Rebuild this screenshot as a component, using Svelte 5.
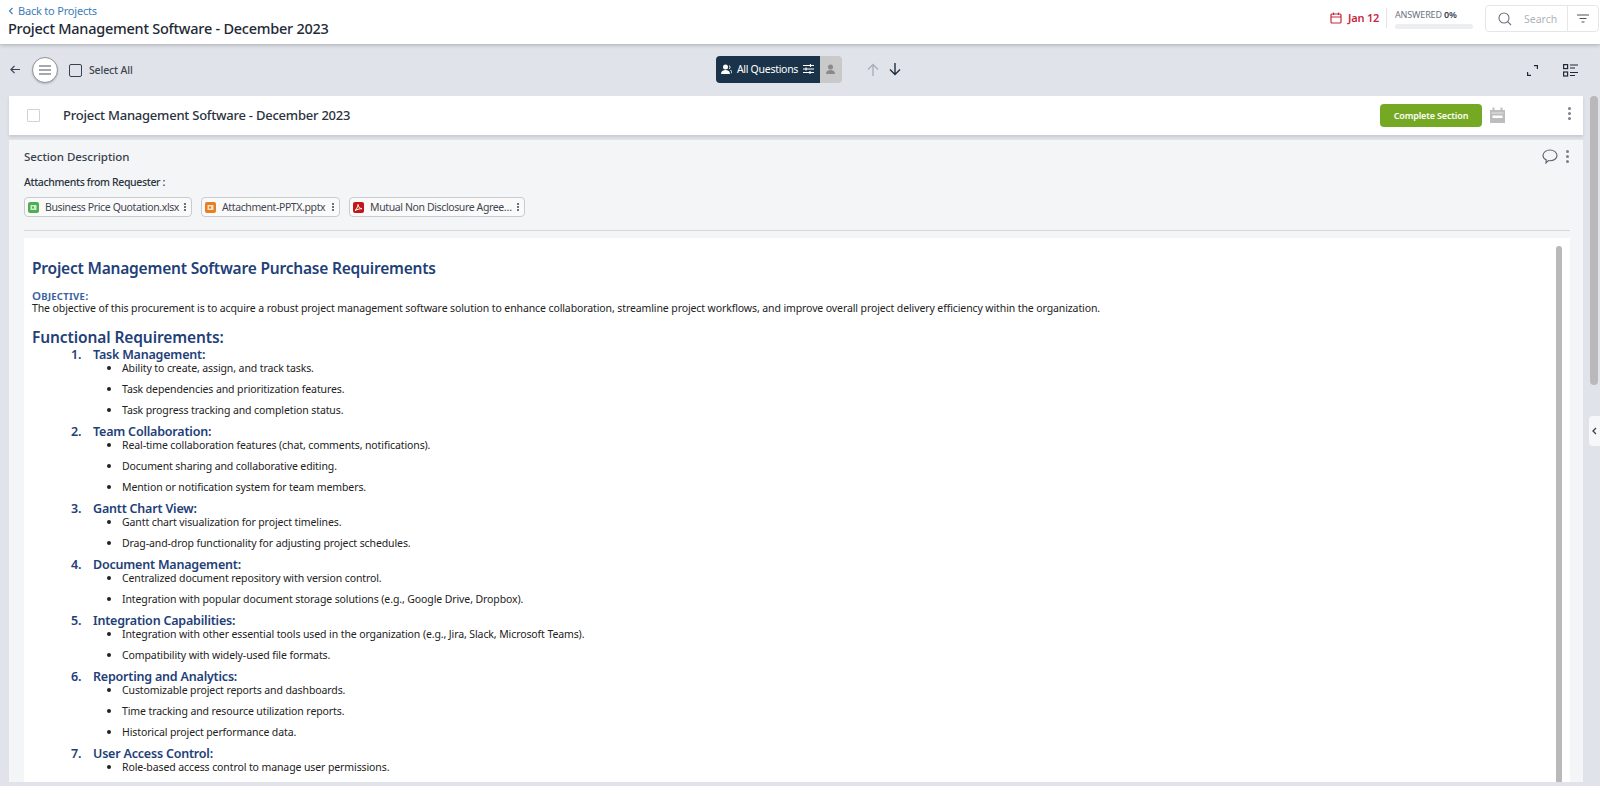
<script>
  const sections = [
    { t: 'Task Management:', i: ['Ability to create, assign, and track tasks.', 'Task dependencies and prioritization features.', 'Task progress tracking and completion status.'] },
    { t: 'Team Collaboration:', i: ['Real-time collaboration features (chat, comments, notifications).', 'Document sharing and collaborative editing.', 'Mention or notification system for team members.'] },
    { t: 'Gantt Chart View:', i: ['Gantt chart visualization for project timelines.', 'Drag-and-drop functionality for adjusting project schedules.'] },
    { t: 'Document Management:', i: ['Centralized document repository with version control.', 'Integration with popular document storage solutions (e.g., Google Drive, Dropbox).'] },
    { t: 'Integration Capabilities:', i: ['Integration with other essential tools used in the organization (e.g., Jira, Slack, Microsoft Teams).', 'Compatibility with widely-used file formats.'] },
    { t: 'Reporting and Analytics:', i: ['Customizable project reports and dashboards.', 'Time tracking and resource utilization reports.', 'Historical project performance data.'] },
    { t: 'User Access Control:', i: ['Role-based access control to manage user permissions.'] }
  ];
  const chips = [
    { n: 'Business Price Quotation.xlsx', c: '#4caf50', w: 168, pdf: false },
    { n: 'Attachment-PPTX.pptx', c: '#e67e22', w: 139, pdf: false },
    { n: 'Mutual Non Disclosure Agree…', c: '#c01818', w: 176, pdf: true }
  ];
</script>

<div class="page">
  <header class="top">
    <div class="top-left">
      <a class="back" href="#top"><svg width="6" height="8" viewBox="0 0 6 8"><path d="M4.5 1 1.5 4l3 3" fill="none" stroke="#3d7ab8" stroke-width="1.1"/></svg>Back to Projects</a>
      <h1 class="title">Project Management Software - December 2023</h1>
    </div>
    <div class="due">
      <svg width="12" height="12" viewBox="0 0 12 12" fill="none" stroke="#c8283c" stroke-width="1.2"><rect x="1" y="2" width="10" height="9" rx="1"/><path d="M1 5h10M3.5 0.5v2.5M8.500 0.500v2.500"/></svg>
      <span>Jan 12</span>
    </div>
    <div class="progress">
      <div class="ans">ANSWERED <b>0%</b></div>
      <div class="bar"></div>
    </div>
    <div class="search">
      <svg class="mag" width="14" height="14" viewBox="0 0 14 14" fill="none" stroke="#6b7280" stroke-width="1.1"><circle cx="6" cy="6" r="5"/><path d="m9.700 9.700 3.300 3.300"/></svg>
      <span class="ph">Search</span>
      <span class="filter"><svg width="12" height="9" viewBox="0 0 12 9" stroke="#4b5563" stroke-width="1.200"><path d="M0 1h12M2.500 4.500h7M4.500 8h3"/></svg></span>
    </div>
  </header>

  <div class="toolbar">
    <div class="tl">
      <svg class="arrow" width="10" height="9" viewBox="0 0 11 10" fill="none" stroke="#374151" stroke-width="1.300"><path d="M5 1 1 5l4 4M1 5h10"/></svg>
      <span class="circle"><svg width="12" height="10" viewBox="0 0 12 10" stroke="#4b5563" stroke-width="1.200"><path d="M0 1h12M0 5h12M0 9h12"/></svg></span>
      <span class="check dark"></span>
      <span class="sel">Select All</span>
    </div>
    <div class="tc">
      <div class="pill">
        <div class="pill-on">
          <svg width="11" height="10" viewBox="0 0 11 10" fill="#fff"><circle cx="4.500" cy="3" r="2.500"/><path d="M0 10c0-3 2-4 4.500-4S9 7 9 10z"/><path d="M8 1.500a2 2 0 0 1 0 3.500M9.500 6c1 .8 1.500 2 1.500 3.500" fill="none" stroke="#fff"/></svg>
          <span>All Questions</span>
          <svg width="11" height="10" viewBox="0 0 11 10" stroke="#fff" stroke-width="1.200"><path d="M0 1.500h11M0 5h11M0 8.500h11"/><path d="M7.500 0v3M3 3.500v3M7 7v3"/></svg>
        </div>
        <div class="pill-off"><svg width="9" height="10" viewBox="0 0 9 10" fill="#8a8a8a"><circle cx="4.500" cy="3" r="2.500"/><path d="M0 10c0-3 2-4 4.500-4S9 7 9 10z"/></svg></div>
      </div>
      <svg class="up" width="12" height="13" viewBox="0 0 12 13" fill="none" stroke="#a9afb8" stroke-width="1.400"><path d="M1 6.500l5-5 5 5M6 1.500V13"/></svg>
      <svg class="down" width="12" height="13" viewBox="0 0 12 13" fill="none" stroke="#1f2f40" stroke-width="1.400"><path d="M1 6.500l5 5 5-5M6 11.500V0"/></svg>
    </div>
    <div class="tr">
      <svg width="11" height="11" viewBox="0 0 11 11" fill="none" stroke="#1f2937" stroke-width="1.200"><path d="M7 .6h3.400V4M4 10.400H.6V7"/></svg>
      <svg width="15" height="13" viewBox="0 0 15 13" fill="none" stroke="#1f2937" stroke-width="1.200"><rect x=".6" y=".6" width="4" height="4"/><rect x=".6" y="8" width="4" height="4"/><path d="M7 1h8M7 4h5M7 8.500h8M7 11.500h5"/></svg>
    </div>
  </div>

  <div class="main">
    <div class="col">
      <section class="card">
        <span class="check light"></span>
        <h2 class="card-title">Project Management Software - December 2023</h2>
        <button class="complete">Complete Section</button>
        <svg class="cal" width="17" height="17" viewBox="0 0 17 17" fill="#bdbdbd"><path d="M1 3h15v13H1zM3.500 0.500h2v3h-2zM11.500 0.500h2v3h-2z"/><path d="M2.500 5.500h12v1h-12z" fill="#e6e6e6"/><path d="M3.500 8.500h10v2.500h-10z" fill="#fff"/></svg>
        <span class="kebab big"><i></i><i></i><i></i></span>
      </section>

      <section class="panel">
        <div class="panel-head">
          <span class="sd">Section Description</span>
          <svg width="16" height="15" viewBox="0 0 16 15" fill="none" stroke="#5b6470" stroke-width="1.100"><path d="M8 1c3.900 0 7 2.400 7 5.400s-3.100 5.400-7 5.400c-.6 0-1.200 0-1.800-.2L4 14l.2-3.200C2.300 9.800 1 8.200 1 6.400 1 3.400 4.100 1 8 1z"/></svg>
          <span class="kebab"><i></i><i></i><i></i></span>
        </div>
        <div class="att">Attachments from Requester :</div>
        <div class="chips">
          {#each chips as c}
            <div class="chip" style="width:{c.w}px">
              <svg class="fi" width="11" height="11" viewBox="0 0 11 11">
                <rect width="11" height="11" rx="2" fill={c.c} />
                {#if c.pdf}
                  <path d="M2 8.500C3.500 7.500 4.800 5 5 2.500c.4 2.500 1.700 4 4 4.200C7 6.700 4.500 7.300 2 8.500z" fill="none" stroke="#fff" stroke-width="1" />
                {:else}
                  <rect x="2.500" y="3" width="6" height="5" rx=".5" fill="#fff" fill-opacity=".75" />
                  <rect x="4" y="4.500" width="2" height="2" fill={c.c} />
                {/if}
              </svg>
              <span class="chip-n">{c.n}</span>
              <span class="kebab tiny"><i></i><i></i><i></i></span>
            </div>
          {/each}
        </div>
        <hr class="rule" />
        <div class="doc">
          <div class="inner-bar"></div>
          <h3 class="doc-h">Project Management Software Purchase Requirements</h3>
          <div class="obj">Objective:</div>
          <p class="para">The objective of this procurement is to acquire a robust project management software solution to enhance collaboration, streamline project workflows, and improve overall project delivery efficiency within the organization.</p>
          <h4 class="fr">Functional Requirements:</h4>
          <ol class="ol">
            {#each sections as s}
              <li>
                <strong>{s.t}</strong>
                <ul>
                  {#each s.i as it}<li>{it}</li>{/each}
                </ul>
              </li>
            {/each}
          </ol>
        </div>
      </section>
    </div>
    <div class="rail">
      <div class="outer-bar"></div>
      <div class="tab"><svg width="5" height="8" viewBox="0 0 5 8" fill="none" stroke="#374151" stroke-width="1.300"><path d="M4 1 1 4l3 3"/></svg></div>
    </div>
  </div>
</div>

<style>
  :global(body) { margin: 0; background: #e0e4ea; font-family: "Noto Sans", sans-serif; color: #222; }
  .page { height: 786px; width: 1600px; display: flex; flex-direction: column; overflow: hidden; }
  .top { height: 44px; background: #fff; box-shadow: 0 1px 4px rgba(0,0,0,.25); display: flex; align-items: flex-start; position: relative; z-index: 2; flex: none; }
  .top-left { padding: 4px 0 0 8px; flex: 1; }
  .back { display: flex; align-items: center; gap: 4px; font-size: 11px; line-height: 14px; color: #3d7ab8; text-decoration: none; letter-spacing: -.2px; }
  .title { margin: 0; font-size: 14.500px; line-height: 20px; font-weight: 500; color: #1f2a37; letter-spacing: -.25px; }
  .due { display: flex; align-items: center; gap: 6px; margin-top: 11px; color: #c8283c; font-size: 11px; font-weight: 600; line-height: 14px; width: 56px; letter-spacing: -.2px; }
  .progress { border-left: 1px solid #e2e4e8; height: 20px; margin-top: 8px; padding-left: 8px; width: 90px; }
  .ans { font-size: 9px; line-height: 12px; color: #6b7280; margin-top: 1px; letter-spacing: -.15px; }
  .ans b { color: #374151; font-weight: 600; }
  .bar { width: 78px; height: 5px; border-radius: 3px; background: #eceef0; margin-top: 3px; }
  .search { margin: 5px 1px 0 0; width: 114px; height: 27px; box-sizing: border-box; border: 1px solid #e4e6e9; border-radius: 4px; display: flex; align-items: center; position: relative; }
  .mag { margin-left: 12px; }
  .ph { margin-left: 12px; font-size: 10.500px; color: #b0b4ba; flex: 1; }
  .filter { border-left: 1px solid #e4e6e9; height: 100%; width: 30px; display: flex; align-items: center; justify-content: center; }

  .toolbar { height: 52px; flex: none; display: grid; grid-template-columns: 1fr auto 1fr; align-items: center; }
  .tl { display: flex; align-items: center; padding-left: 10px; }
  .arrow { margin-right: 12px; margin-top: -2px; }
  .circle { width: 26px; height: 26px; box-sizing: border-box; border: 1px solid #8e949c; border-radius: 50%; background: #fff; display: flex; align-items: center; justify-content: center; box-shadow: 0 1px 2px rgba(0,0,0,.2); }
  .check { display: block; width: 13px; height: 13px; box-sizing: border-box; flex: none; }
  .check.dark { border: 1.500px solid #374151; border-radius: 2px; margin-left: 11px; }
  .check.light { border: 1px solid #cfd2d6; background: #fff; border-radius: 1px; margin-left: 18px; }
  .sel { font-size: 10.500px; font-weight: 500; margin-left: 7px; color: #3f4650; letter-spacing: -.15px; }
  .tc { display: flex; align-items: center; padding-left: 16px; margin-top: -2px; }
  .pill { display: flex; height: 27px; border-radius: 4px; overflow: hidden; margin-right: 25px; }
  .pill-on { width: 104px; background: #1a3348; color: #fff; display: flex; align-items: center; justify-content: space-between; box-sizing: border-box; padding: 0 5px; font-size: 10.500px; letter-spacing: -.28px; }
  .pill-off { width: 22px; background: #c9c9c9; display: flex; align-items: center; justify-content: center; }
  .down { margin-left: 10px; }
  .tr { display: flex; justify-content: flex-end; gap: 25px; align-items: center; padding-right: 22px; }

  .main { flex: 1; display: flex; min-height: 0; padding-bottom: 4px; }
  .col { margin-left: 9px; width: 1574px; display: flex; flex-direction: column; min-height: 0; }
  .card { height: 39px; flex: none; background: #fff; display: flex; align-items: center; box-shadow: 0 2px 3px rgba(0,0,0,.12); position: relative; }
  .card-title { margin: -1px 0 0 23px; font-size: 13px; font-weight: 500; color: #2a3340; flex: 1; letter-spacing: -.23px; }
  .complete { width: 102px; height: 23px; border: 0; border-radius: 4px; background: #76a923; color: #fff; font: 600 9px "Noto Sans", sans-serif; letter-spacing: -.15px; padding: 0; }
  .cal { margin: 0 77px 0 7px; }
  .kebab { display: flex; flex-direction: column; gap: 2px; }
  .kebab i { width: 3px; height: 3px; border-radius: 50%; background: #7a808a; display: block; }
  .kebab.big { position: absolute; right: 12px; top: 11px; }
  .kebab.tiny { gap: 1px; margin-left: auto; }
  .kebab.tiny i { width: 2px; height: 2px; background: #444; }
  .panel { margin-top: 5px; flex: 1; min-height: 0; background: #f4f5f6; padding: 0 13px 0 15px; overflow: hidden; }
  .panel-head { display: flex; align-items: center; height: 32px; gap: 8px; padding-right: 1px; }
  .sd { flex: 1; font-size: 11.500px; font-weight: 500; color: #3a424d; letter-spacing: -.05px; }
  .att { font-size: 10.500px; font-weight: 500; color: #2a3340; line-height: 14px; margin-top: 3px; letter-spacing: -.36px; }
  .chips { display: flex; gap: 9px; margin-top: 8px; }
  .chip { height: 20px; box-sizing: border-box; border: 1px solid #c8cbd0; border-radius: 4px; background: #fff8; display: flex; align-items: center; padding: 0 5px 0 3px; font-size: 10.500px; color: #3f4650; letter-spacing: -.38px; white-space: nowrap; }
  .fi { margin-right: 6px; flex: none; }
  .rule { border: 0; border-top: 1px solid #d6d8dc; margin: 13px 0 7px; }
  .doc { background: #fff; height: 600px; padding: 0 8px; position: relative; }
  .inner-bar { position: absolute; top: 8px; right: 8px; width: 6px; bottom: 0; background: #b9b9b9; border-radius: 3px 3px 0 0; }
  .doc-h { margin: 0; padding-top: 19px; font-size: 15.500px; line-height: 22px; font-weight: 600; color: #224078; letter-spacing: -.2px; }
  .obj { margin-top: 11px; font-variant: small-caps; font-size: 11.500px; line-height: 12px; font-weight: 600; color: #3a62a0; letter-spacing: .3px; }
  .para { margin: 0; font-size: 10.500px; line-height: 13px; color: #222; letter-spacing: -.105px; white-space: nowrap; }
  .fr { margin: 11px 0 0; font-size: 15.500px; line-height: 22px; font-weight: 600; color: #224078; letter-spacing: -.1px; }
  .ol { margin: 0; padding: 0 0 0 61px; list-style: decimal; color: #224078; font-weight: 600; font-size: 12.500px; letter-spacing: -.2px; }
  .ol > li { line-height: 14px; }
  .ol > li::marker { font-weight: 600; content: counter(list-item) ".\2002\2009\2009\2009"; }
  .ol strong { font-weight: 600; }
  .ol ul { margin: -1px 0 0; padding: 0 0 0 29px; list-style: disc; letter-spacing: 0; }
  .ol ul li { font-weight: 400; font-size: 10.500px; line-height: 14px; margin-bottom: 7px; color: #222; letter-spacing: -.105px; }
  .ol ul li:last-child { margin-bottom: 8px; }
  .ol ul li::marker { font-size: 11px; }
  .rail { flex: 1; position: relative; }
  .outer-bar { position: absolute; left: 7px; top: 0; width: 8px; height: 289px; background: #b9b9b9; border-radius: 4px; }
  .tab { position: absolute; right: 0; top: 320px; width: 11px; height: 30px; background: #f6f7f8; border-radius: 4px 0 0 4px; display: flex; align-items: center; justify-content: center; }
</style>
